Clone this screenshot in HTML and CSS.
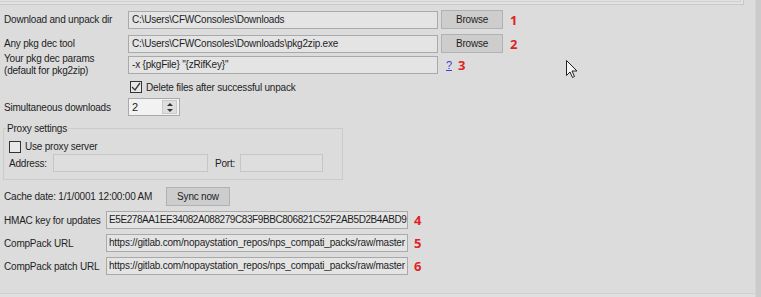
FILE: index.html
```html
<!DOCTYPE html>
<html lang="en">
    <head>
        <meta charset="UTF-8" />
        <title>Options</title>
        <link rel="stylesheet" href="styles.css">
    </head>
    <body>
        <div class="window">
            <div class="content">
                <div class="prev-box"><div class="prev-inner"></div></div>

                <div class="row r1">
                    <span class="lbl w-long">Download and unpack dir</span>
                    <div class="textbox wide">C:\Users\CFWConsoles\Downloads</div>
                    <div class="btn browse">Browse</div>
                    <span class="num">1</span>
                </div>
                <div class="row r2">
                    <span class="lbl w-long">Any pkg dec tool</span>
                    <div class="textbox wide">C:\Users\CFWConsoles\Downloads\pkg2zip.exe</div>
                    <div class="btn browse">Browse</div>
                    <span class="num">2</span>
                </div>
                <div class="row r3">
                    <span class="lbl w-long two-line">Your pkg dec params<br>(default for pkg2zip)</span>
                    <div class="textbox wide">-x {pkgFile} "{zRifKey}"</div>
                    <a class="help">?</a>
                    <span class="num n3">3</span>
                </div>
                <div class="row r-check">
                    <span class="checkbox checked">
                        <svg width="10" height="10" viewBox="0 0 10 10"><path d="M1 5 L4 8 L9 1" fill="none" stroke="#3a3a3a" stroke-width="1.3"/></svg>
                    </span>
                    <span class="check-text">Delete files after successful unpack</span>
                </div>
                <div class="row r-spin">
                    <span class="lbl w-long">Simultaneous downloads</span>
                    <div class="spinner">
                        <span class="spin-val">2</span>
                        <span class="spin-btns">
                            <span class="arrow up"></span>
                            <span class="arrow down"></span>
                        </span>
                    </div>
                </div>

                <fieldset class="group">
                    <legend>Proxy settings</legend>
                    <div class="row g-check">
                        <span class="checkbox"></span>
                        <span class="check-text">Use proxy server</span>
                    </div>
                    <div class="row g-addr">
                        <span class="lbl w-addr">Address:</span>
                        <div class="textbox disabled addr"></div>
                        <span class="lbl w-port">Port:</span>
                        <div class="textbox disabled port"></div>
                    </div>
                </fieldset>

                <div class="row r-cache">
                    <span class="lbl w-cache">Cache date: 1/1/0001 12:00:00 AM</span>
                    <div class="btn sync">Sync now</div>
                </div>
                <div class="row r-url first">
                    <span class="lbl w-short">HMAC key for updates</span>
                    <div class="textbox url hex">E5E278AA1EE34082A088279C83F9BBC806821C52F2AB5D2B4ABD9</div>
                    <span class="num">4</span>
                </div>
                <div class="row r-url">
                    <span class="lbl w-short">CompPack URL</span>
                    <div class="textbox url">https://gitlab.com/nopaystation_repos/nps_compati_packs/raw/master</div>
                    <span class="num">5</span>
                </div>
                <div class="row r-url">
                    <span class="lbl w-short">CompPack patch URL</span>
                    <div class="textbox url">https://gitlab.com/nopaystation_repos/nps_compati_packs/raw/master</div>
                    <span class="num">6</span>
                </div>

                <div class="bottom-line"></div>
            </div>
            <div class="edge"></div>

            <!-- mouse pointer over the form -->
            <svg class="cursor" width="13" height="19" viewBox="0 0 13 19">
                <path d="M0.5 0.5 L0.5 15.5 L4 12 L6.5 17.5 L8.5 16.5 L6 11 L11 11 Z" fill="#f4f4f4" stroke="#222" stroke-width="1"/>
            </svg>
        </div>
    </body>
</html>
```

FILE: styles.css
```css
body{
    margin: 0;
    padding: 0;
    background-color: #dcdcdc;
}

.window{
    position: relative;
    width: 761px;
    height: 297px;
    display: flex;
    overflow: hidden;
    font-family: "Liberation Sans", Arial, sans-serif;
    font-size: 10px;
    letter-spacing: -0.2px;
    color: #1e1e1e;
}

.content{
    width: 756px;
    display: flex;
    flex-direction: column;
}

.edge{
    width: 5px;
    background-color: #cbcbcb;
    border-left: 1px solid #d4d4d4;
}

.prev-box{
    width: 743px;
    height: 4px;
    border-right: 1px solid #c9c9c9;
    border-bottom: 1px solid #c9c9c9;
    background-color: #e2e2e2;
}
.prev-inner{
    width: 740px;
    height: 1px;
    border-right: 1px solid #cfcfcf;
    border-bottom: 1px solid #cfcfcf;
}

.row{
    display: flex;
    align-items: center;
    margin-left: 4px;
}

.r1{ height: 19px; margin-top: 5px; }
.r2{ height: 19px; margin-top: 5px; }
.r3{ height: 24px; }
.r-check{ height: 16px; margin-top: 2px; padding-left: 126px; }
.r-spin{ height: 18px; margin-top: 3px; }
.r-cache{ height: 19px; margin-top: 7px; }
.r-url{ height: 18px; margin-top: 5px; }

.lbl{
    flex: none;
    white-space: nowrap;
}
.w-long{ width: 124px; }
.w-short{ width: 102px; }
.w-cache{ width: 162px; }
.w-addr{ width: 44px; }
.w-port{ width: 25px; margin-left: 7px; }
.two-line{ line-height: 12px; }

.textbox{
    box-sizing: border-box;
    height: 18px;
    line-height: 16px;
    padding: 0 3px;
    background-color: #e4e4e4;
    border: 1px solid #a9a9a9;
    white-space: nowrap;
    overflow: hidden;
    flex: none;
}
.wide{ width: 310px; }
.url{ width: 302px; padding: 0 2px; }
.hex{ letter-spacing: -0.42px; }
.disabled{ background-color: #dedede; border-color: #c6c6c6; }
.addr{ width: 155px; }
.port{ width: 83px; }

.btn{
    box-sizing: border-box;
    height: 19px;
    line-height: 17px;
    text-align: center;
    background-color: #cdcdcd;
    border: 1px solid #b1b1b1;
    flex: none;
}
.browse{ width: 62px; margin-left: 3px; }
.sync{ width: 64px; }

.num{
    font-family: "Open Sans", "Liberation Sans", sans-serif;
    font-weight: bold;
    font-size: 13px;
    letter-spacing: 0;
    color: #e02424;
    margin-left: 7px;
}
.r-url .num{ margin-left: 6px; }
.n3{ margin-left: 6px; }

.help{
    margin-left: 8px;
    color: #3b3bd6;
    text-decoration: underline;
    font-size: 11px;
}

.checkbox{
    box-sizing: border-box;
    width: 12px;
    height: 12px;
    border: 1px solid #333;
    background-color: #e8e8e8;
    display: flex;
    align-items: center;
    justify-content: center;
    flex: none;
}
.check-text{ margin-left: 4px; }

.spinner{
    box-sizing: border-box;
    width: 52px;
    height: 18px;
    display: flex;
    background-color: #f2f2f2;
    border: 1px solid #a9a9a9;
}
.spin-val{
    flex: 1;
    padding-left: 3px;
    line-height: 16px;
    font-size: 11px;
}
.spin-btns{
    width: 13px;
    margin: 1px 2px 1px 0;
    background-color: #dedede;
    border: 1px solid #c9c9c9;
    display: flex;
    flex-direction: column;
    align-items: center;
    justify-content: space-around;
}
.arrow{
    width: 0;
    height: 0;
    border-left: 3px solid transparent;
    border-right: 3px solid transparent;
}
.arrow.up{ border-bottom: 3px solid #333; }
.arrow.down{ border-top: 3px solid #333; }

.group{
    width: 340px;
    box-sizing: border-box;
    margin: 6px 0 0 3px;
    padding: 0 0 7px 5px;
    border: 1px solid #cbcbcb;
}
.group legend{
    padding: 0 1px;
    margin-left: -3px;
    line-height: 13px;
}
.group .row{ margin-left: 0; }
.g-check{ height: 13px; margin-top: 5px; }
.g-addr{ height: 18px; margin-top: 1px; }

.bottom-line{
    margin-top: auto;
    height: 3px;
    border-top: 1px solid #d0d0d0;
    background-color: #e0e0e0;
}

.cursor{
    position: absolute;
    left: 566px;
    top: 60px;
}
```
